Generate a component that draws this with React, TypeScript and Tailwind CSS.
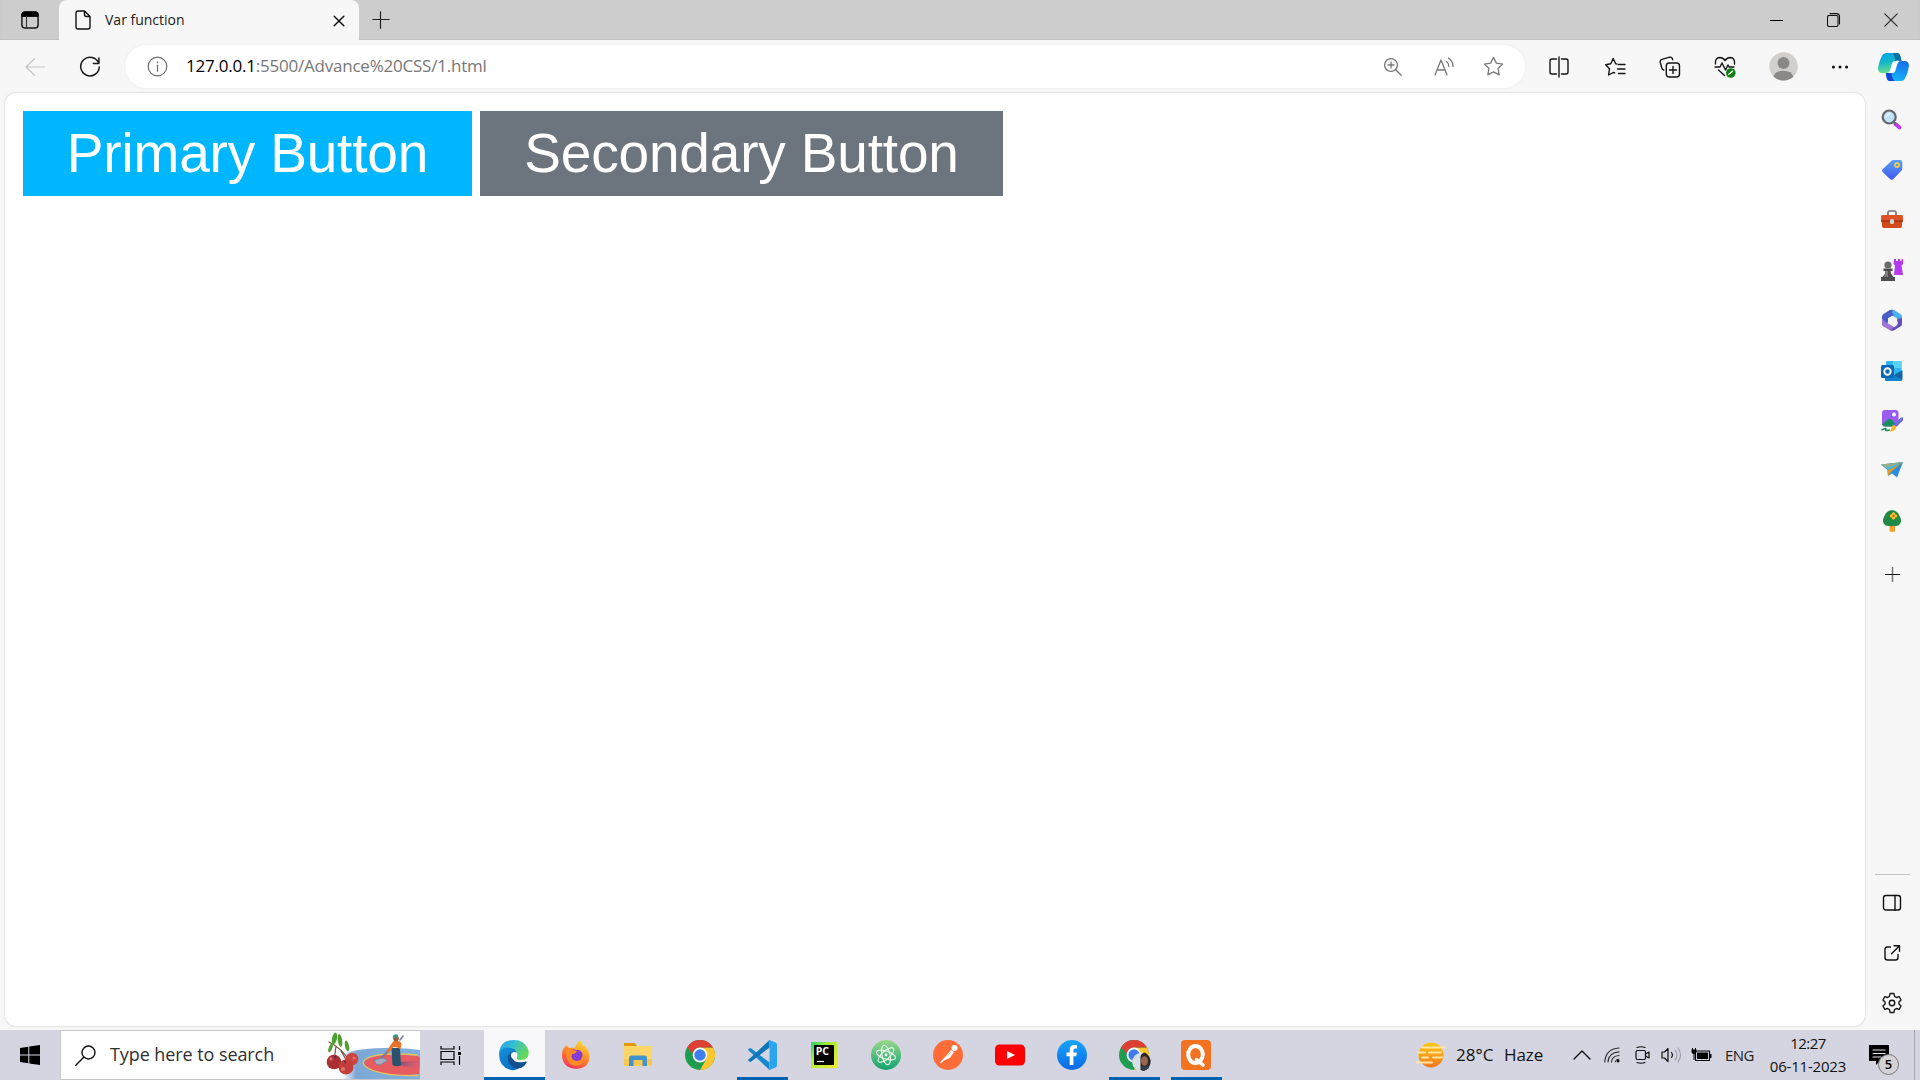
import React from "react";

type IconProps = { children: React.ReactNode; w?: number; h?: number; box?: string; className?: string };

function Svg({ children, w = 20, h, box, className = "" }: IconProps) {
  const hh = h ?? w;
  return (
    <svg width={w} height={hh} viewBox={box ?? `0 0 ${w} ${hh}`} fill="none" strokeLinecap="round" strokeLinejoin="round" className={`block shrink-0 ${className}`}>
      {children}
    </svg>
  );
}

function TitleBar() {
  return (
    <header className="flex h-10 shrink-0 bg-[#cdcdcd] shadow-[inset_0_-1px_1px_#c0c0c0]">
      <div className="flex h-10 w-[59px] items-center justify-center rounded-br-md">
        <Svg w={18}>
          <rect x=".9" y=".9" width="16.2" height="16.2" rx="3" stroke="#1b1b1b" strokeWidth="1.5" />
          <path d="M1 5V3.500Q1 1 3.500 1h11Q17 1 17 3.500V5z" fill="#000" stroke="#000" />
          <path d="M5.500 5v12" stroke="#333" strokeWidth="1.100" />
        </Svg>
      </div>
      <div className="flex h-10 w-[300px] items-center rounded-t-lg bg-[#f7f7f7] pl-4">
        <Svg w={16} h={20}>
          <path d="M3 1h6.500L15 6.500V17q0 2-2 2H3q-2 0-2-2V3q0-2 2-2zM9.500 1v3.500q0 2 2 2H15" stroke="#111" strokeWidth="1.400" />
        </Svg>
        <span className="mb-[2px] ml-[14px] w-[200px] whitespace-nowrap font-['Open_Sans','Noto_Sans',sans-serif] text-[14px] text-[#1a1a1a]">Var function</span>
        <Svg w={12} className="mt-px ml-[28px]">
          <path d="M1.200 1.200l9.600 9.600M10.800 1.200L1.200 10.800" stroke="#111" strokeWidth="1.500" />
        </Svg>
      </div>
      <div className="flex h-10 items-center pb-px pl-[13px]">
        <Svg w={18}>
          <path d="M8.500 .8v16.400M.8 8.500h16.400" stroke="#222" strokeWidth="1.200" />
        </Svg>
      </div>
      <div className="ml-auto flex h-10 items-center pb-px">
        <div className="flex w-[57px] justify-center"><Svg w={14}><path d="M.5 7.500h12" stroke="#000" strokeWidth="1" /></Svg></div>
        <div className="flex w-[57px] justify-center">
          <Svg w={14}><rect x=".5" y="2.500" width="10.500" height="11" rx="1.500" stroke="#111" strokeWidth="1.100" /><path d="M3 .6h6.500q3 0 3 3V11" stroke="#111" strokeWidth="1.100" /></Svg>
        </div>
        <div className="flex w-[58px] justify-center"><Svg w={14}><path d="M.8.8l12.400 12.400M13.200.8L.8 13.200" stroke="#222" strokeWidth="1.100" /></Svg></div>
      </div>
    </header>
  );
}

const starPath = "M10 1.300l2.700 5.500 6 .9-4.350 4.250 1.030 6.050L10 15.150 4.620 18l1.030-6.050L1.300 7.700l6-.9z";

function Toolbar() {
  return (
    <div className="flex h-[53px] shrink-0 items-center bg-[#f7f7f7] pl-[25px]">
      <Svg w={20} h={18}><path d="M19.500 9H1M9.500.8L1 9l8.500 8.200" stroke="#c5c5c5" strokeWidth="1.200" /></Svg>
      <Svg w={22} className="ml-[34px]">
        <path d="M19.700 7.200A9.300 9.300 0 1 0 20.300 11M19.900 2v5.500h-5.500" stroke="#1a1a1a" strokeWidth="1.500" />
      </Svg>
      <div className="ml-6 flex h-[43px] w-[1400px] shrink-0 items-center rounded-full bg-white pl-[22px] shadow-[0_0_3px_#e9e9e9]">
        <Svg w={21}>
          <circle cx="10.500" cy="10.500" r="9.300" stroke="#6e6e6e" strokeWidth="1.200" />
          <path d="M10.500 9.200v6" stroke="#6e6e6e" strokeWidth="1.300" /><circle cx="10.500" cy="6.300" r=".9" fill="#6e6e6e" />
        </Svg>
        <span className="mb-px ml-[18px] whitespace-nowrap font-['Open_Sans','Noto_Sans',sans-serif] text-[17px] tracking-[-0.22px] text-[#777]"><span className="text-black">127.0.0.1</span>:5500/Advance%20CSS/1.html</span>
        <div className="ml-auto flex items-center pr-[21px]">
          <Svg w={20} className="mr-[31px]">
            <circle cx="8" cy="8" r="6.400" stroke="#777" strokeWidth="1.300" /><path d="M12.700 12.700l5.500 5.500M8 5v6M5 8h6" stroke="#777" strokeWidth="1.300" />
          </Svg>
          <Svg w={20} className="mr-[29px]">
            <path d="M1 18L7 3l6 15M3 13h8M12.500 4.500q2.300 1.800 2.300 4.800M14.500 1q4.500 3.200 4.500 8.500" stroke="#777" strokeWidth="1.300" />
          </Svg>
          <Svg w={21} box="0 0 20 20"><path d={starPath} stroke="#777" strokeWidth="1.200" /></Svg>
        </div>
      </div>
      <div className="flex shrink-0 items-center">
        <div className="flex w-[68px] justify-center">
          <Svg w={22}>
            <path d="M8.500 3H4Q2 3 2 5v11q0 2 2 2h4.500M13.500 3H18q2 0 2 2v11q0 2-2 2h-4.500M11 1v20" stroke="#151515" strokeWidth="1.400" />
          </Svg>
        </div>
        <div className="flex w-[44px] justify-center">
          <Svg w={21} h={20}>
            <path d="M12 7l-1.300-.2L8.200 1.500 5.700 6.800l-5 .9 3.800 4-.9 6.300 5-2.600 1 .5M13.500 7.500H20M12.500 12H20M13.500 16.500H20" stroke="#151515" strokeWidth="1.400" />
          </Svg>
        </div>
        <div className="flex w-[66px] justify-center">
          <Svg w={22}>
            <rect x="7.300" y="7" width="13.200" height="14" rx="3" stroke="#151515" strokeWidth="1.400" />
            <path d="M14 10.500v7M10.500 14h7M4.800 14.200Q3.200 13.500 2.700 11.800L1.300 6.500Q.7 4 3 3.300L10.500 1.200q2.500-.5 3.200 2.500" stroke="#151515" strokeWidth="1.400" />
          </Svg>
        </div>
        <div className="flex w-[44px] justify-center">
          <Svg w={22}>
            <path d="M1.500 8Q.7 1.800 5.800 1.500q3 0 5.200 3 2.200-3 5.200-3 5.100.3 4.300 6.500M1 11h5l2-4 3.500 7 2.500-5 1 2h5M4.500 14l6 5.500" stroke="#151515" strokeWidth="1.400" />
            <circle cx="16.800" cy="17" r="4.800" fill="#108010" /><path d="M14.800 18.300l3.700-3" stroke="#fff" strokeWidth="1.400" />
          </Svg>
        </div>
        <div className="flex w-[72px] justify-center">
          <Svg w={29}>
            <circle cx="14.500" cy="14.500" r="14.200" fill="#d2d0cd" /><circle cx="14.500" cy="11" r="6" fill="#8b8784" />
            <path d="M4.700 24.700Q6 18.700 14.500 18.700t9.800 6Q20 28.500 14.500 28.500t-9.800-3.800z" fill="#8b8784" />
          </Svg>
        </div>
        <div className="flex w-[42px] justify-center">
          <Svg w={18} h={6}><circle cx="2.400" cy="3" r="1.500" fill="#111" /><circle cx="9" cy="3" r="1.500" fill="#111" /><circle cx="15.600" cy="3" r="1.500" fill="#111" /></Svg>
        </div>
        <div className="flex w-[59px] justify-center pl-[5px]"><Copilot /></div>
      </div>
    </div>
  );
}

function Copilot() {
  return (
    <Svg w={31} h={28}>
      <defs>
        <linearGradient id="cpA" x1="0" y1="0" x2=".2" y2="1"><stop stopColor="#00a5e8" /><stop offset=".5" stopColor="#13b5ca" /><stop offset="1" stopColor="#67de91" /></linearGradient>
        <linearGradient id="cpB" x1=".6" y1="0" x2=".3" y2="1"><stop stopColor="#1772e8" /><stop offset="1" stopColor="#14b8ff" /></linearGradient>
      </defs>
      <path d="M8 0h11q2.500 0 3.300 3l1.200 5h-6q-3 0-4 4l-1 4q-1 4-4 4H4Q0 20 0 15 1 8 4 2.500 5.500 0 8 0z" fill="url(#cpA)" />
      <path d="M15 0h4q2.500 0 3.300 3l1.200 5h-6Q17 4 15 0z" fill="#0b6fa4" />
      <path d="M23 8h3.500q4.500 0 4.500 5-1 7-4 12.500-1.500 2.500-4 2.500H12q-2.500 0-3.300-3L7.500 20H13q3 0 4-4l1-4q1-4 5-4z" fill="url(#cpB)" />
      <path d="M8 20h5q1 5 3.500 8H12q-2.500 0-3.300-3z" fill="#1746d2" />
      <path d="M18 8q1-1 3.500 0-1.500 1-2.500 4l-1.500 5.500q-.8 2.500-3.500 2.500h-2.500q1-1 1.500-3l1.200-4.500Q15 9 18 8z" fill="#fff" />
    </Svg>
  );
}

const sideIcons: { key: string; node: React.ReactNode }[] = [
  { key: "search", node: (<>
    <path d="M14.500 15l4 3.500" stroke="#c03bf5" strokeWidth="3.800" /><path d="M12.500 13l2 2" stroke="#666" strokeWidth="2" />
    <circle cx="8.200" cy="8" r="6.500" fill="#bfe2fb" stroke="#66666a" strokeWidth="2.200" /><path d="M5.200 7.500Q6 5 9 4.700" stroke="#e8f6ff" strokeWidth="1.500" /></>) },
  { key: "shopping", node: (<>
    <path d="M12.500 1H19q2.300 0 2.300 2.300v6.500q0 1-.7 1.800l-8.500 8.600q-1.400 1.300-2.800 0L1.600 13q-1.300-1.400 0-2.800l9-8.500q.8-.7 1.900-.7z" fill="url(#tagG)" />
    <circle cx="16" cy="6" r="2.100" fill="#579fe8" stroke="#ffd13b" strokeWidth="1.500" /></>) },
  { key: "tools", node: (<>
    <path d="M7 6V3.500Q7 2 8.500 2h5Q15 2 15 3.500V6" stroke="#777" strokeWidth="1.700" />
    <rect x="0" y="6" width="22" height="7.500" rx="1.500" fill="#dc5425" /><path d="M1 12h20v5q0 2-2 2H3q-2 0-2-2z" fill="#d04a1a" /><path d="M.5 12h21" stroke="#88230c" strokeWidth="1" /><rect x="9" y="10" width="4" height="5" rx="1.500" fill="#d2d2d2" /></>) },
  { key: "games", node: (<>
    <path d="M13 0h2v2h2V0h2v2h1.500V0H22v5l-1.500 1.500L22 16h-9l1-9.500L12.500 5z" fill="#b53af2" />
    <circle cx="7" cy="6" r="3.600" fill="#6c6c6c" /><path d="M2.500 9.500h9V12H9.500q0 3.500 3 6H14v4H0v-4h1.500q3-2.500 3-6h-2z" fill="#4e4e50" /><path d="M4.500 12h2.500v6H3q1.500-2.500 1.500-6z" fill="#7c7c7c" /></>) },
  { key: "m365", node: (<>
    <path d="M9 1q2-1 4 0l6.500 4Q21 6 21 8v7l-5-3V9.500L11 6.500 6 9.500V3z" fill="#4eb1ef" />
    <path d="M9 1L2.500 5Q1 6 1 8v8q5 1 6-3V9.500l6-3.500q-3-2-1-5z" fill="#4860c4" />
    <path d="M1 9v6q0 1.500 1.500 2.500L9 21.300q2 1 4 0l3-1.800-8-4.500q-5-2-7-6z" fill="#a174d4" />
    <path d="M21 9v6q0 1.500-1.500 2.500L13 21.300q-2 .7-4-.3l6-4q3-2 1-7z" fill="#6450bd" /><path d="M11 7l4 2.300v4.400L11 16l-4-2.300V9.300z" fill="#f4f4f7" /></>) },
  { key: "outlook", node: (<>
    <rect x="5" y="1" width="15.500" height="13" rx="1" fill="#31b5ef" /><path d="M12 1h8.500v7H12z" fill="#58d3fa" /><path d="M4 11l8.500 4L21.300 10v9.500q0 1.500-1.500 1.500H5.500Q4 21 4 19.500z" fill="#1482ce" /><path d="M13 15.500l8.300-5v9z" fill="#1463a6" />
    <rect x="0" y="5" width="13" height="13" rx="1.500" fill="#0969b9" /><circle cx="6.500" cy="11.500" r="3.200" stroke="#fff" strokeWidth="1.900" /></>) },
  { key: "drop", node: (<>
    <rect x="1" y="0" width="16.500" height="16.500" rx="3" fill="#9a5cf0" /><circle cx="13" cy="4.500" r="1.900" fill="#fff" /><path d="M1.300 14.500L6.500 9.500q2-1.500 4 0l5 5q-1 2-3 2H4q-2 0-2.700-2z" fill="#188d63" />
    <path d="M.8 19.800q5-2.500 4-.5t3.500.7" stroke="#168e61" strokeWidth="1.500" /><path d="M14 15.500L21 9" stroke="#6a69e0" strokeWidth="3.400" /><path d="M11.500 15.500q3-.8 3.700 1.500-.7 4.500-6.700 4.700 1.700-2 3-6.200z" fill="#f8b52b" /></>) },
  { key: "send", node: (<>
    <path d="M0 4.500L22 2 16 17.500l-5-4-4 2.500-.5-6z" fill="#268ee7" /><path d="M0 4.500L22 2 7 10z" fill="#36bdf1" /><path d="M22 2L6.500 10.500 7 16l3-4z" fill="#e49b1d" /><path d="M0 4.500L22 2 5 8z" fill="#e8a62c" opacity=".55" /></>) },
  { key: "tree", node: (<>
    <rect x="8.500" y="14" width="5.500" height="7.700" rx="1" fill="#f2a027" /><path d="M11 0Q17 1 18.500 6q2.500 4 1 7-1.500 3-5 3h-7Q4 16 2.500 13q-1.500-3 1-7Q5 1 11 0z" fill="#218a46" />
    <g fill="#ffc52a"><circle cx="12.500" cy="3.800" r="1.600" /><circle cx="12.500" cy="8" r="1.600" /><circle cx="10.400" cy="5.900" r="1.600" /><circle cx="14.600" cy="5.900" r="1.600" /></g><circle cx="12.500" cy="5.900" r="1.100" fill="#e4571c" /></>) },
];

function Sidebar() {
  return (
    <aside className="flex w-[54px] shrink-0 flex-col items-center pt-[2px]">
      {sideIcons.map((s) => (
        <div key={s.key} className="flex h-[50.1px] w-[54px] items-center justify-center"><Svg w={22}>
          <defs><linearGradient id="tagG" x2="0" y2="1"><stop stopColor="#58a1fa" /><stop offset="1" stopColor="#4258e8" /></linearGradient></defs>
          {s.node}</Svg></div>
      ))}
      <Svg w={15} className="mt-[21px]"><path d="M7.500.5v14" stroke="#777" strokeWidth="1.500" /><path d="M.5 7.500h14" stroke="#111" strokeWidth="1.200" /></Svg>
      <div className="mt-auto mb-[18px] h-px w-[35px] bg-[#c2c2c2]" />
      <Svg w={20}><rect x="1.500" y="2.500" width="17" height="14.500" rx="2.500" stroke="#111" strokeWidth="1.400" /><path d="M13 2.500V17" stroke="#111" strokeWidth="1.400" /></Svg>
      <Svg w={18} className="mt-[31px]"><path d="M7.500 3H4.500Q2 3 2 5.500v8Q2 16 4.500 16h8q2.500 0 2.500-2.500v-3M11 1.700h5.500v5.500M16.300 2L8.500 9.700" stroke="#111" strokeWidth="1.400" /></Svg>
      <Svg w={22} box="0 0 24 24" className="mt-[30px] mb-[16px]">
        <path d="M9.900 1.700h4.200l.7 3.100 2 1.200 3-1 2.100 3.700-2.300 2.100v2.400l2.300 2.100-2.100 3.700-3-1-2 1.200-.7 3.100H9.900l-.7-3.100-2-1.200-3 1-2.100-3.700 2.300-2.100v-2.400L2.100 8.700 4.200 5l3 1 2-1.200z" stroke="#151515" strokeWidth="1.500" /><circle cx="12" cy="12" r="3" stroke="#151515" strokeWidth="1.500" />
      </Svg>
    </aside>
  );
}

function SearchArt() {
  return (
    <Svg w={94} h={48}>
      <defs>
        <linearGradient id="sea" x1="0" x2="1"><stop stopColor="#7fa9d5" stopOpacity="0" /><stop offset=".18" stopColor="#7da8d5" /><stop offset="1" stopColor="#7eb0dd" /></linearGradient>
        <linearGradient id="shade" x1="0" x2="1" y2=".4"><stop stopColor="#5b4a78" /><stop offset="1" stopColor="#c9628a" stopOpacity=".2" /></linearGradient>
      </defs>
      <path d="M16 48V24Q24 18 58 17q25 0 36 2v29z" fill="url(#sea)" />
      <path d="M92 25Q58 21 44 27q-13 5 3 12 17 7 46 4l1-16z" fill="#e65c61" />
      <path d="M91 24Q58 21 44 26q-15 6 3 13.500 17 6 45 5" stroke="#f1c34c" strokeWidth="1.300" />
      <path d="M72 31l22-1q-1 4 0 8-10-1-22-4z" fill="url(#shade)" />
      <path d="M65.500 17h8.500l1 17q-4 2.500-8.500 0z" fill="#28526e" />
      <path d="M68 9.500q6-.5 7.500 3l-1 6-3-2-4-.5-7 8-1.500-1.500 6-9z" fill="#e6742c" />
      <circle cx="70" cy="7.500" r="2.800" fill="#9a5b3d" /><path d="M66.500 6.500q1-4 5-3l1 3z" fill="#3b9a83" />
      <path d="M61 21l-7 7M74 9l3-4" stroke="#6382aa" strokeWidth="1.500" /><path d="M49 29l7-2 6 2-8 5-4-1z" fill="#a3adc2" stroke="#7985a5" strokeWidth=".8" />
      <path d="M3 11q14 7 20 19M10 15L8 30M15 20l7 12" stroke="#79543a" strokeWidth="1.200" />
      <g fill="#4fa033"><ellipse cx="8.500" cy="7.500" rx="2.500" ry="6" transform="rotate(12 8.500 7.500)" /><ellipse cx="14" cy="9.500" rx="2.200" ry="6.500" transform="rotate(-8 14 9.500)" /><ellipse cx="21" cy="15" rx="2" ry="5.500" transform="rotate(-12 21 15)" /><ellipse cx="4.500" cy="17" rx="1.800" ry="4.500" transform="rotate(20 4.500 17)" /></g>
      <circle cx="26" cy="28" r="6.300" fill="#cd4541" /><circle cx="8" cy="31" r="7.300" fill="#a92f30" /><circle cx="20" cy="36" r="7.500" fill="#c43d3c" />
      <g fill="#ef8b7f" opacity=".7"><circle cx="5" cy="28" r="1.700" /><circle cx="17" cy="38" r="2" /><circle cx="28" cy="27" r="1.500" /></g>
      <g fill="#5b3450"><circle cx="9" cy="26" r="1.200" /><circle cx="19" cy="31" r="1.200" /></g>
    </Svg>
  );
}

function Chrome() {
  return (<>
    <circle cx="15" cy="15" r="15" fill="#1e9d50" />
    <path d="M15 7.500h13A15 15 0 0 1 15 30l6.500-11.300z" fill="#fcc62d" />
    <path d="M2 7.500A15 15 0 0 1 28 7.500H15q-6 0-7 6z" fill="#dc4034" />
    <circle cx="15" cy="15" r="7.400" fill="#fff" /><circle cx="15" cy="15" r="5.700" fill="#3e7df0" />
  </>);
}

const taskApps: { key: string; bar?: boolean; active?: boolean; node: React.ReactNode }[] = [
  { key: "edge", active: true, node: (<>
    <defs><linearGradient id="edA" x1="0" x2="1" y2=".5"><stop stopColor="#269ee0" /><stop offset=".45" stopColor="#33bdd6" /><stop offset="1" stopColor="#63d957" /></linearGradient><linearGradient id="edB" x2=".8" y2="1"><stop stopColor="#1693d8" /><stop offset="1" stopColor="#0669c3" /></linearGradient></defs>
    <path d="M0 12Q2 0 15 0q10 0 14 9 3 10-7 11-5 0-4-3 2-7-6-8Q4 8 0 14z" fill="url(#edA)" />
    <path d="M0 14Q2 7 9 7.500q7 .5 9 5-5-2-6 3-1 8 11 9.500Q19 31 12 30 0 27 0 14z" fill="url(#edB)" />
    <path d="M12 12q-5 5-2 11 4 7 12 5 4-2 6-6-1-1-3 0-11 2-13-7z" fill="#124f91" /><circle cx="15" cy="15.500" r="3" fill="#f8f8fa" /></>) },
  { key: "firefox", node: (<>
    <defs><linearGradient id="ff" x1=".8" x2=".3" y2="1"><stop stopColor="#ffe63f" /><stop offset=".5" stopColor="#ff8a27" /><stop offset="1" stopColor="#f8305e" /></linearGradient></defs>
    <path d="M19 0q2 2 3 6l1-1q5 5 5.500 10.500Q29 28 15 29 2 28 1 16 1 9 4 7l1-2 3 3q4-1 6 0 2-6 5-8z" fill="url(#ff)" /><circle cx="15" cy="15" r="6.500" fill="#853bd4" /><path d="M5 8q5-1 7 2l4 1q-1 3-5 3-2 6 5 7 5 0 7-4-1 9-9 9Q4 24 5 8z" fill="#ff8b25" /><path d="M12 9q4-3 7-1 3 2 3 6-3-5-7-4z" fill="#ffb32f" /></>) },
  { key: "files", node: (<>
    <path d="M1 3h11l2 3v5H1z" fill="#dd9a09" /><rect x="1" y="6" width="28" height="20" rx=".5" fill="#ffd567" /><path d="M1 19h28v6.500H1z" fill="#f9c64e" /><path d="M6 26v-8q0-2.500 2.500-2.500h13Q24 15.500 24 18v8h-4.500v-6h-9v6z" fill="#4192d0" /></>) },
  { key: "chrome", node: <Chrome /> },
  { key: "code", bar: true, node: (<>
    <path d="M.8 9.700l1.500-1.300q1-.7 2 0L22.500 22.500V30z" fill="#1488cf" /><path d="M.8 20.300l1.500 1.300q1 .7 2 0L22.500 7.500V0z" fill="#0f75b9" /><path d="M22.500 0l6 2.500Q30 3 30 5v20q0 2-1.500 2.500l-6 2.500-1.500-1.500q1.500 0 1.500-2V3.500q0-2-1.500-2z" fill="#2ba5ee" /></>) },
  { key: "pycharm", node: (<>
    <defs><linearGradient id="py" x2="1" y2="1"><stop stopColor="#21d26b" /><stop offset=".35" stopColor="#a5ed35" /><stop offset="1" stopColor="#f1eb28" /></linearGradient></defs>
    <rect x="2" y="2" width="26" height="26" fill="url(#py)" /><rect x="5" y="5" width="20" height="20" fill="#050505" />
    <text x="6.700" y="15" fill="#fff" fontFamily="Open Sans, sans-serif" fontWeight="700" fontSize="10.500">PC</text><path d="M8 21.500h7" stroke="#fff" strokeWidth="1.200" strokeLinecap="butt" /></>) },
  { key: "atom", node: (<>
    <defs><linearGradient id="at" x2="0" y2="1"><stop stopColor="#98d98a" /><stop offset="1" stopColor="#13a270" /></linearGradient></defs>
    <circle cx="15" cy="15" r="15" fill="url(#at)" /><g stroke="#e9faee" strokeWidth="1.100"><ellipse cx="15" cy="15" rx="4" ry="10" transform="rotate(-12 15 15)" /><ellipse cx="15" cy="15" rx="4" ry="10" transform="rotate(48 15 15)" /><ellipse cx="15" cy="15" rx="4" ry="10" transform="rotate(108 15 15)" /></g><circle cx="15" cy="15" r="1.400" fill="#fff" /></>) },
  { key: "postman", node: (<>
    <circle cx="15" cy="15" r="15" fill="#ff6c37" /><path d="M18 10l3 2-4 6-5 2-4 3-1-.5 4-4.500z" fill="#fff" /><circle cx="21.500" cy="8" r="3" fill="#fff" /><path d="M17.500 12.500l-6 5" stroke="#ff9a76" strokeWidth=".8" /></>) },
  { key: "youtube", node: (<>
    <rect x="0" y="4.500" width="30" height="21" rx="4.500" fill="#f00" /><path d="M12 11l8 4-8 4z" fill="#fff" /></>) },
  { key: "facebook", node: (<>
    <defs><linearGradient id="fb" x2="0" y2="1"><stop stopColor="#19a5fb" /><stop offset="1" stopColor="#0868e6" /></linearGradient></defs>
    <circle cx="15" cy="15" r="15" fill="url(#fb)" /><path d="M12.700 25v-8.800H9.500v-3.700h3.200v-2.800q0-4.700 4.600-4.700l2.700.3v3.200h-1.700q-1.900 0-1.900 1.900v2.100h3.500l-.6 3.700h-2.900V25z" fill="#fff" /></>) },
  { key: "profile", bar: true, node: (<>
    <Chrome /><circle cx="22.500" cy="22" r="9.300" fill="#d7dfe5" /><path d="M21.500 30V17q.5-4 4.500-4.500 5 3 5.700 8.500 0 7-6.700 10z" fill="#292625" /><ellipse cx="25.500" cy="21" rx="3.500" ry="4.800" fill="#9a6650" /><path d="M22 26q4 2 7-1l1 3q-3 3-7 2.500z" fill="#33404b" /></>) },
  { key: "q", bar: true, node: (<>
    <rect width="30" height="30" rx="4" fill="#f47321" /><ellipse cx="14.500" cy="14.500" rx="7.300" ry="8.500" stroke="#fff" strokeWidth="4" /><path d="M15.500 19.500l6.500 5.500" stroke="#fff" strokeWidth="3.500" /></>) },
];

const ui = "font-['Open_Sans','Noto_Sans',sans-serif]";

function Taskbar() {
  return (
    <footer className="flex h-[50px] shrink-0 items-center overflow-hidden bg-[#d4d5e1]">
      <div className="flex w-[60px] shrink-0 justify-center">
        <Svg w={20}><path d="M0 3l8.300-1.200v7.700H0zM9.300 1.600L20 0v9.500H9.300zM0 10.500h8.300v7.700L0 17zM9.300 10.500H20V20L9.300 18.400z" fill="#000" /></Svg>
      </div>
      <div className="flex h-[50px] w-[360px] shrink-0 items-center overflow-hidden border border-r-0 border-[#c6c6c6] bg-white pl-[14px]">
        <Svg w={21}><circle cx="13.500" cy="7.500" r="6.500" stroke="#111" strokeWidth="1.400" /><path d="M8.700 12.300L.8 20.200" stroke="#111" strokeWidth="1.400" /></Svg>
        <span className={`${ui} mb-px ml-[14px] w-[216px] shrink-0 whitespace-nowrap text-[18px] tracking-[-0.08px] text-[#303030]`}>Type here to search</span>
        <SearchArt />
      </div>
      <div className="flex w-[64px] shrink-0 justify-center pr-[4px]">
        <Svg w={21}><path d="M1 1v3h13V1M1 20v-3h13v3M1 6.500h13v8H1z" stroke="#000" strokeWidth="1.200" strokeLinecap="butt" strokeLinejoin="miter" /><path d="M19.500 1v4M19.500 11v9" stroke="#000" strokeWidth="1.200" strokeLinecap="butt" /><path d="M18 7h3v3h-3z" fill="#000" /></Svg>
      </div>
      <div className="flex h-full shrink-0 gap-px">
        {taskApps.map((a) => (
          <div key={a.key} className={a.active ? "flex h-full w-[61px] flex-col items-center bg-[#f8f8fa]" : "flex h-full w-[61px] flex-col items-center"}>
            <Svg w={32} box="0 0 32 32" className="mt-[10px]">{a.node}</Svg>
            <div className={a.active ? "mt-auto h-[3px] w-full bg-[#0063b1]" : a.bar ? "mt-auto h-[3px] w-[51px] bg-[#0063b1]" : "hidden"} />
          </div>
        ))}
      </div>
      <div className="ml-auto flex h-full shrink-0 items-center">
        <Svg w={30} h={26}>
          <defs><linearGradient id="sun" x2="0" y2="1"><stop stopColor="#ffca0a" /><stop offset="1" stopColor="#f17623" /></linearGradient></defs>
          <circle cx="15" cy="13" r="12.500" fill="url(#sun)" /><path d="M6 5.500h23M2 10.500h7M13 10.500h12M6 15.500h6M17 15.500h9M1 20.500h15" stroke="#ffe6a4" strokeWidth="1.900" />
        </Svg>
        <span className={`${ui} ml-[10px] w-[48px] whitespace-nowrap text-[17px] text-[#111]`}>28°C</span>
        <span className={`${ui} w-[69px] whitespace-nowrap text-[17px] tracking-[-0.1px] text-[#111]`}>Haze</span>
        <Svg w={18} h={10}><path d="M1 9l8-8 8 8" stroke="#111" strokeWidth="1.400" /></Svg>
        <Svg w={16} className="ml-[13px]"><path d="M.8 15Q1.500 2 15 1M4 15Q4.500 5.500 15 4.800M7.500 15q.5-6 7.500-6.500" stroke="#333" strokeWidth="1.200" /><path d="M11 15q.5-3 4-3" stroke="#333" /><circle cx="14" cy="14" r="1.500" fill="#000" /></Svg>
        <Svg w={16} h={18} className="ml-[15px]"><rect x="1" y="4.500" width="9.500" height="9" rx="1.500" stroke="#111" strokeWidth="1.200" /><path d="M10.500 8l3.500-2v6l-3.500-2M2 1.500Q6 0 10 1.500M2 16.500q4 1.500 8 0" stroke="#111" strokeWidth="1.200" /></Svg>
        <Svg w={21} h={16} className="ml-[10px]"><path d="M1 5v6h2.500L7 14.500v-13L3.500 5z" stroke="#111" strokeWidth="1.200" /><path d="M10.500 5.500q2 2.500 0 5" stroke="#222" strokeWidth="1.200" /><path d="M14 3q4 5 0 10M17 1q5 7 0 14" stroke="#9c9da7" strokeWidth="1.100" /></Svg>
        <Svg w={21} h={14} className="ml-[9px]"><rect x="4.500" y="3" width="14" height="9.500" stroke="#000" strokeWidth="1.100" /><path d="M6 4.500h11v6.500H6z" fill="#000" /><path d="M19 6h1.500v4H19zM.5 1.500h5V4q0 2-2.500 2T.5 4z" fill="#000" /><path d="M1.500 0v2M4.500 0v2M3 5v6.500" stroke="#000" /></Svg>
        <span className={`${ui} ml-[13px] w-[45px] whitespace-nowrap text-[15px] tracking-[-0.6px] text-[#222]`}>ENG</span>
        <div className={`${ui} flex w-[76px] flex-col items-center whitespace-nowrap text-[15px] leading-[23px] tracking-[-0.2px] text-[#111]`}><span className="tracking-[-0.5px]">12:27</span><span>06-11-2023</span></div>
        <div className="relative ml-[23px] h-5 w-[45px]">
          <Svg w={20}><path d="M0 0h20v16h-9l-4 4v-4H0z" fill="#000" /><path d="M4 5h12M4 8.500h12M4 12h8" stroke="#dfe0e8" strokeWidth="1.200" /></Svg>
          <span className={`${ui} absolute top-[9px] left-[9px] flex h-[21px] w-[21px] items-center justify-center rounded-full border border-[#777] bg-[#d3d3d5] text-[13px] font-semibold text-black`}>5</span>
        </div>
        <div className="mr-[5px] h-full w-px bg-[#a5a6b0]" />
      </div>
    </footer>
  );
}

export default function App() {
  return (
    <div className="flex h-[1080px] w-[1920px] flex-col overflow-hidden bg-[#f7f7f7]">
      <TitleBar />
      <Toolbar />
      <div className="flex min-h-0 flex-1 bg-[#f7f7f7]">
        <main className="mb-1 ml-[5px] flex w-[1860px] shrink-0 items-start gap-2 rounded-[11px] bg-white pt-[18px] pl-[18px] shadow-[0_0_2px_#bcbcbc]">
          <button className="flex h-[85px] w-[449px] items-center justify-center bg-[#00b7ff] font-['Liberation_Sans',Arial,sans-serif] text-[55px] leading-none tracking-[-0.17px] text-white">Primary Button</button>
          <button className="flex h-[85px] w-[523px] items-center justify-center bg-[#6c757d] font-['Liberation_Sans',Arial,sans-serif] text-[55px] leading-none tracking-[-0.17px] text-white">Secondary Button</button>
        </main>
        <Sidebar />
      </div>
      <Taskbar />
    </div>
  );
}
